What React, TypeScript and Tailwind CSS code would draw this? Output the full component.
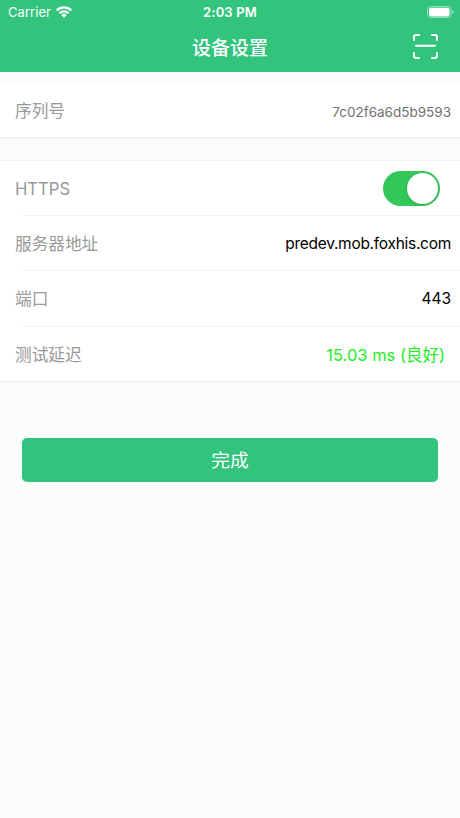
import { ReactNode } from "react";

interface RowProps {
  label: string;
  className?: string;
  children: ReactNode;
}

function Row({ label, className = "", children }: RowProps) {
  return (
    <div className={`flex items-center justify-between pl-[15px] ${className}`}>
      <span className="pt-[3px] text-[16.7px] tracking-[-0.05px] text-[#999]">{label}</span>
      {children}
    </div>
  );
}

function Divider() {
  return <div className="ml-[23px] h-px bg-[#f0f0f1]" />;
}

function WifiIcon() {
  return (
    <svg className="h-3 w-4" viewBox="0 0 16 12" fill="none" stroke="white" strokeWidth="2.2">
      <path d="M.8 4.4a10.3 10.3 0 0 1 14.4 0" />
      <path d="M3.4 7.2a6.6 6.6 0 0 1 9.2 0" />
      <path d="M5.3 9a3.9 3.9 0 0 1 5.4 0L8 11.8Z" fill="white" stroke="none" />
    </svg>
  );
}

function BatteryIcon() {
  return (
    <svg className="h-3 w-[27px]" viewBox="0 0 27 12">
      <rect x="0.5" y="0.5" width="23.5" height="11" rx="3.2" fill="none" stroke="white" strokeOpacity="0.45" />
      <rect x="2" y="1.8" width="20.5" height="8.6" rx="1.8" fill="white" />
      <path d="M25.2 4v4c1.6-.7 1.6-3.3 0-4Z" fill="white" fillOpacity="0.6" />
    </svg>
  );
}

function ScanIcon() {
  return (
    <svg
      className="h-[25px] w-[25px]"
      viewBox="0 0 25 25"
      fill="none"
      stroke="white"
      strokeWidth="2"
      strokeLinecap="round"
    >
      <path d="M1 6V3a2 2 0 0 1 2-2h3M19 1h3a2 2 0 0 1 2 2v3M24 19v3a2 2 0 0 1-2 2h-3M6 24H3a2 2 0 0 1-2-2v-3M3 11.7h19" />
    </svg>
  );
}

export default function App() {
  return (
    <div className="h-[818px] w-[460px] overflow-hidden bg-[#fafbfd] font-[Inter,'Noto_Sans_CJK_SC',sans-serif]">
      <header className="h-[71.5px] bg-[#32c47c] text-white">
        <div className="grid h-6 grid-cols-3 items-center pr-[6px] pl-2 text-[13px]">
          <div className="flex items-center gap-[5px]">
            <span className="pt-px tracking-[0.05px]">Carrier</span>
            <WifiIcon />
          </div>
          <span className="pt-px pr-0.5 text-center font-semibold tracking-[0.15px] whitespace-nowrap">
            2:03 PM
          </span>
          <div className="flex justify-end">
            <BatteryIcon />
          </div>
        </div>
        <div className="grid h-[47px] grid-cols-[1fr_auto_1fr] items-center px-[22px]">
          <span />
          <h1 className="pt-[3px] text-[19px] font-medium">设备设置</h1>
          <div className="flex justify-end pb-[3px]">
            <ScanIcon />
          </div>
        </div>
      </header>

      <section className="mt-[11.5px] border-b border-[#ececef] bg-white">
        <Row label="序列号" className="h-[54px] pr-[9px]">
          <span className="pt-[4px] text-[13.5px] text-[#707070]">7c02f6a6d5b9593</span>
        </Row>
      </section>

      <section className="mt-[22px] border-y border-[#f1f1f3] bg-white">
        <Row label="HTTPS" className="h-[54px] pr-5">
          <button className="flex h-[35px] w-[57px] items-center justify-end rounded-full bg-[#34c759] p-[2px]">
            <span className="size-[31px] rounded-full bg-white shadow" />
          </button>
        </Row>
        <Divider />
        <Row label="服务器地址" className="h-[54px] pr-[9px]">
          <span className="pt-0.5 text-[15.5px] tracking-[-0.28px] text-black">predev.mob.foxhis.com</span>
        </Row>
        <Divider />
        <Row label="端口" className="h-[55px] pr-[9px]">
          <span className="pt-px text-[15.5px] text-black">443</span>
        </Row>
        <Divider />
        <Row label="测试延迟" className="h-[54px] pr-[15px]">
          <span className="pt-[3px] text-[16.5px] text-[#22ee22]">15.03 ms (良好)</span>
        </Row>
      </section>

      <div className="pt-14 pr-[22.5px] pl-[22.4px]">
        <button className="h-11 w-full rounded-[5px] bg-[#32c47c] pt-0.5 text-[18.7px] text-white">完成</button>
      </div>
    </div>
  );
}
